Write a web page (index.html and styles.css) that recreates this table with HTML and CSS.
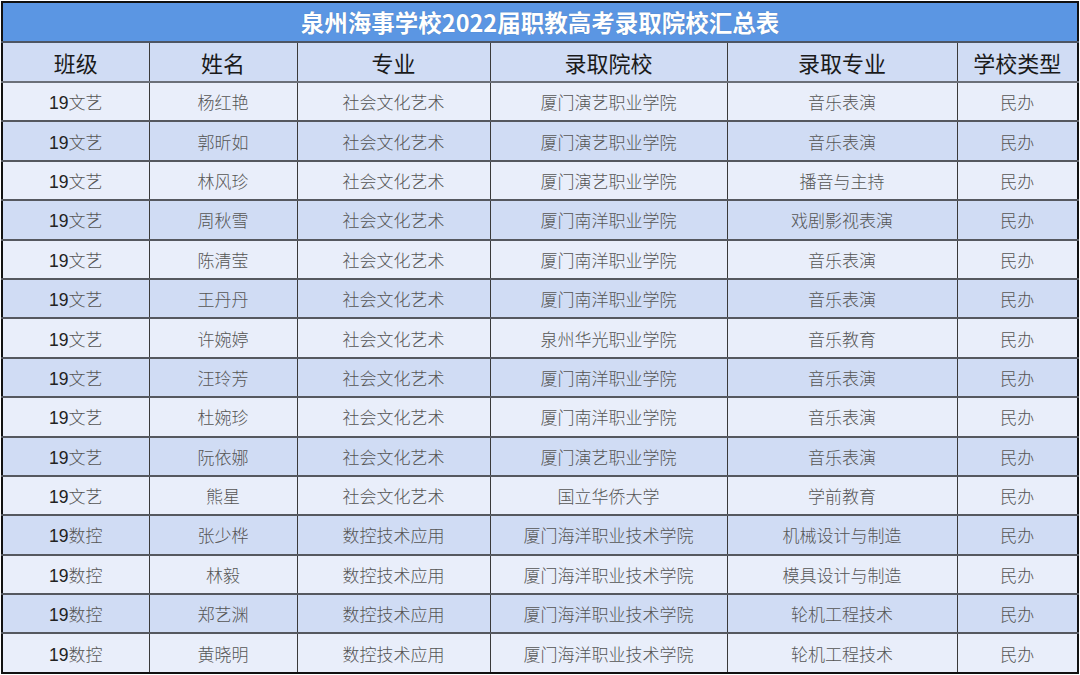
FILE: index.html
```html
<!DOCTYPE html>
<html lang="zh">
<head>
<meta charset="utf-8">
<link rel="stylesheet" href="styles.css">
</head>
<body>
<div class="wrap">
<table class="sheet">
<colgroup>
<col class="c1"><col class="c2"><col class="c3"><col class="c4"><col class="c5"><col class="c6">
</colgroup>
<thead>
<tr class="title"><th colspan="6">泉州海事学校2022届职教高考录取院校汇总表</th></tr>
<tr class="head"><th>班级</th><th>姓名</th><th>专业</th><th>录取院校</th><th>录取专业</th><th>学校类型</th></tr>
</thead>
<tbody>
<tr><td class="cls"><span class="num">19</span>文艺</td><td>杨红艳</td><td>社会文化艺术</td><td>厦门演艺职业学院</td><td>音乐表演</td><td>民办</td></tr>
<tr><td class="cls"><span class="num">19</span>文艺</td><td>郭昕如</td><td>社会文化艺术</td><td>厦门演艺职业学院</td><td>音乐表演</td><td>民办</td></tr>
<tr><td class="cls"><span class="num">19</span>文艺</td><td>林风珍</td><td>社会文化艺术</td><td>厦门演艺职业学院</td><td>播音与主持</td><td>民办</td></tr>
<tr><td class="cls"><span class="num">19</span>文艺</td><td>周秋雪</td><td>社会文化艺术</td><td>厦门南洋职业学院</td><td>戏剧影视表演</td><td>民办</td></tr>
<tr><td class="cls"><span class="num">19</span>文艺</td><td>陈清莹</td><td>社会文化艺术</td><td>厦门南洋职业学院</td><td>音乐表演</td><td>民办</td></tr>
<tr><td class="cls"><span class="num">19</span>文艺</td><td>王丹丹</td><td>社会文化艺术</td><td>厦门南洋职业学院</td><td>音乐表演</td><td>民办</td></tr>
<tr><td class="cls"><span class="num">19</span>文艺</td><td>许婉婷</td><td>社会文化艺术</td><td>泉州华光职业学院</td><td>音乐教育</td><td>民办</td></tr>
<tr><td class="cls"><span class="num">19</span>文艺</td><td>汪玲芳</td><td>社会文化艺术</td><td>厦门南洋职业学院</td><td>音乐表演</td><td>民办</td></tr>
<tr><td class="cls"><span class="num">19</span>文艺</td><td>杜婉珍</td><td>社会文化艺术</td><td>厦门南洋职业学院</td><td>音乐表演</td><td>民办</td></tr>
<tr><td class="cls"><span class="num">19</span>文艺</td><td>阮依娜</td><td>社会文化艺术</td><td>厦门演艺职业学院</td><td>音乐表演</td><td>民办</td></tr>
<tr><td class="cls"><span class="num">19</span>文艺</td><td>熊星</td><td>社会文化艺术</td><td>国立华侨大学</td><td>学前教育</td><td>民办</td></tr>
<tr><td class="cls"><span class="num">19</span>数控</td><td>张少桦</td><td>数控技术应用</td><td>厦门海洋职业技术学院</td><td>机械设计与制造</td><td>民办</td></tr>
<tr><td class="cls"><span class="num">19</span>数控</td><td>林毅</td><td>数控技术应用</td><td>厦门海洋职业技术学院</td><td>模具设计与制造</td><td>民办</td></tr>
<tr><td class="cls"><span class="num">19</span>数控</td><td>郑艺渊</td><td>数控技术应用</td><td>厦门海洋职业技术学院</td><td>轮机工程技术</td><td>民办</td></tr>
<tr><td class="cls"><span class="num">19</span>数控</td><td>黄晓明</td><td>数控技术应用</td><td>厦门海洋职业技术学院</td><td>轮机工程技术</td><td>民办</td></tr>
</tbody>
</table>
</div>
</body>
</html>
```

FILE: styles.css
```css
html, body {
  margin: 0;
  padding: 0;
  background: #ffffff;
}
.wrap {
  padding: 1px 0 0 1px;
}
.sheet {
  border-collapse: collapse;
  table-layout: fixed;
  width: 1078px;
  border: 2px solid #111;
  font-family: "Noto Sans CJK SC", sans-serif;
}
.c1 { width: 147px; }
.c2 { width: 148px; }
.c3 { width: 193px; }
.c4 { width: 237px; }
.c5 { width: 230px; }
.c6 { width: 121px; }

.title th {
  height: 38px;
  padding: 0;
  background: #5b96e3;
  color: #ffffff;
  font-size: 23.5px;
  font-weight: 700;
  text-align: center;
  border-bottom: 2px solid #4d5563;
  text-shadow: 0 0 1px rgba(0,0,0,0.25);
}
.head th {
  height: 38px;
  padding: 0;
  background: #d0dcf4;
  color: #1a1a1a;
  font-size: 22px;
  font-weight: 400;
  text-align: center;
  border-left: 1px solid #3a3a3a;
  border-bottom: 2px solid #6b6f78;
}
td {
  height: 37.4px;
  padding: 0;
  text-align: center;
  font-size: 17px;
  font-weight: 300;
  color: #555;
  border-left: 1px solid #3a3a3a;
  border-bottom: 2px solid #55585f;
  background: #e9eefa;
}
tbody tr:nth-child(even) td {
  background: #d0dcf4;
}
tbody tr:last-child td {
  border-bottom: 2px solid #111;
}
.num {
  font-family: "Liberation Sans", sans-serif;
  font-weight: 400;
  color: #222;
  font-size: 17.5px;
}
```
